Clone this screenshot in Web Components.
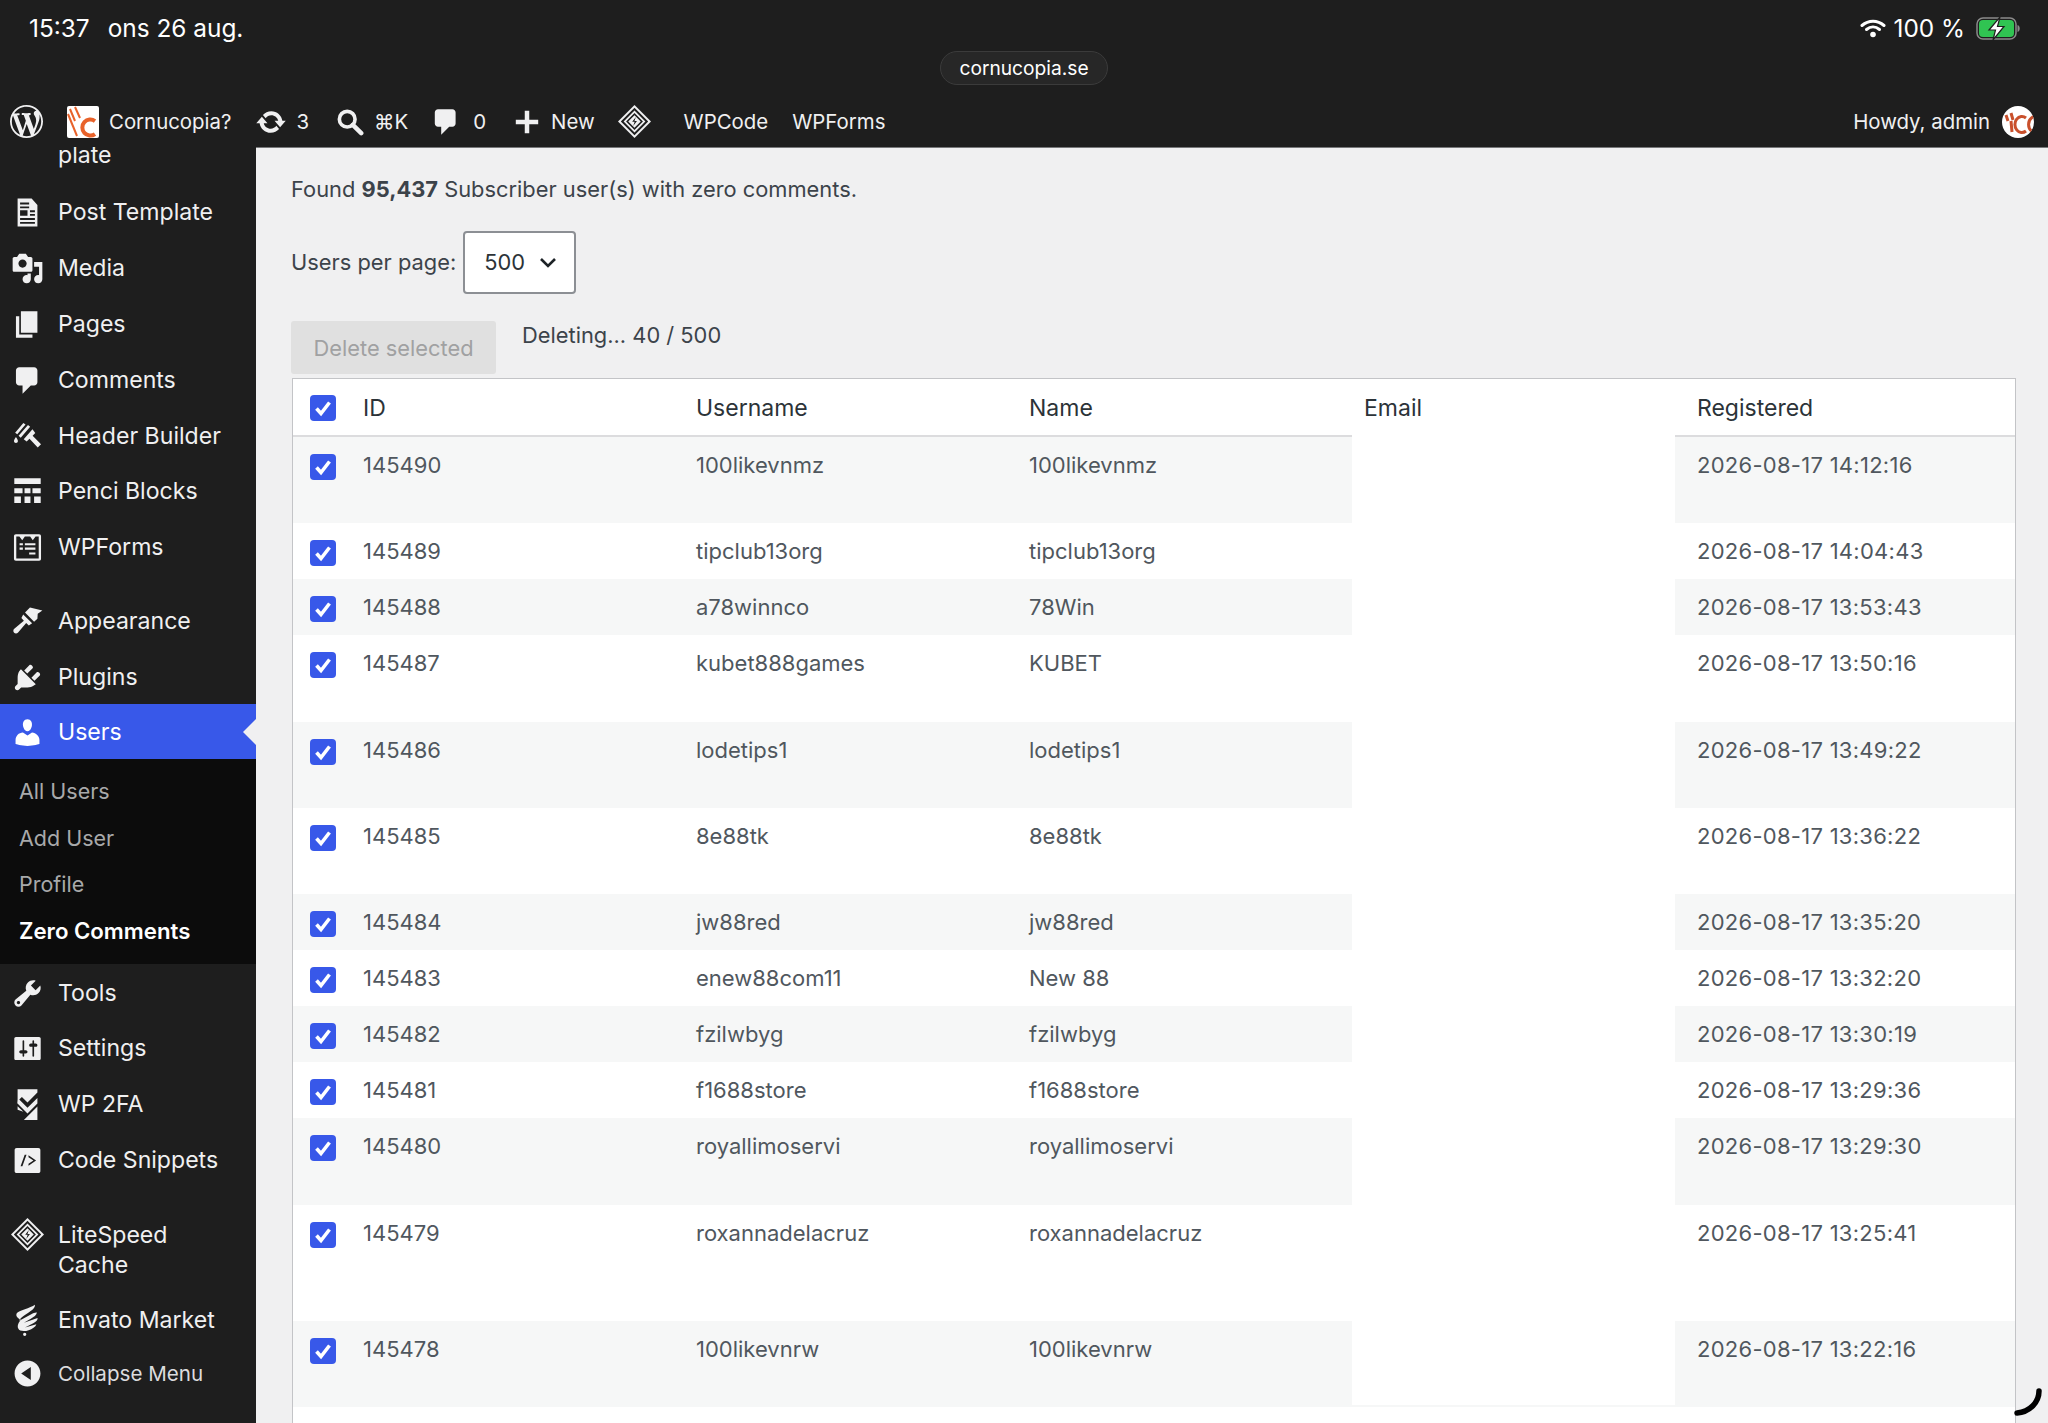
<!DOCTYPE html>
<html lang="sv">
<head>
<meta charset="utf-8">
<title>Zero Comments</title>
<style>
  html, body { margin: 0; height: 1423px; overflow: hidden; background: #1e1e1e; }
  body { font-family: Inter, "Noto Sans", sans-serif; display: flex; flex-direction: column; }
</style>
</head>
<body>
<top-chrome></top-chrome>
<wp-shell>
  <wp-sidebar slot="nav">
    <side-item cut>plate</side-item>
    <side-item icon="template">Post Template</side-item>
    <side-item icon="media">Media</side-item>
    <side-item icon="pages">Pages</side-item>
    <side-item icon="comments">Comments</side-item>
    <side-item icon="header">Header Builder</side-item>
    <side-item icon="penci">Penci Blocks</side-item>
    <side-item icon="forms">WPForms</side-item>
    <side-gap></side-gap>
    <side-item icon="appearance">Appearance</side-item>
    <side-item icon="plugins">Plugins</side-item>
    <side-item icon="users" current>Users</side-item>
    <side-sub>
      <a>All Users</a>
      <a>Add User</a>
      <a>Profile</a>
      <a class="on">Zero Comments</a>
    </side-sub>
    <side-item icon="tools">Tools</side-item>
    <side-item icon="settings">Settings</side-item>
    <side-item icon="twofa">WP 2FA</side-item>
    <side-item icon="code">Code Snippets</side-item>
    <side-gap></side-gap>
    <side-item icon="litespeed" tall>LiteSpeed Cache</side-item>
    <side-item icon="envato">Envato Market</side-item>
    <side-item icon="collapse" small>Collapse Menu</side-item>
  </wp-sidebar>
  <zero-panel>
    <user-table>
      <user-row uid="145490" user="100likevnmz" name="100likevnmz" date="2026-08-17 14:12:16" lines="2"></user-row>
      <user-row uid="145489" user="tipclub13org" name="tipclub13org" date="2026-08-17 14:04:43"></user-row>
      <user-row uid="145488" user="a78winnco" name="78Win" date="2026-08-17 13:53:43"></user-row>
      <user-row uid="145487" user="kubet888games" name="KUBET" date="2026-08-17 13:50:16" lines="2"></user-row>
      <user-row uid="145486" user="lodetips1" name="lodetips1" date="2026-08-17 13:49:22" lines="2"></user-row>
      <user-row uid="145485" user="8e88tk" name="8e88tk" date="2026-08-17 13:36:22" lines="2"></user-row>
      <user-row uid="145484" user="jw88red" name="jw88red" date="2026-08-17 13:35:20"></user-row>
      <user-row uid="145483" user="enew88com11" name="New 88" date="2026-08-17 13:32:20"></user-row>
      <user-row uid="145482" user="fzilwbyg" name="fzilwbyg" date="2026-08-17 13:30:19"></user-row>
      <user-row uid="145481" user="f1688store" name="f1688store" date="2026-08-17 13:29:36"></user-row>
      <user-row uid="145480" user="royallimoservi" name="royallimoservi" date="2026-08-17 13:29:30" lines="2"></user-row>
      <user-row uid="145479" user="roxannadelacruz" name="roxannadelacruz" date="2026-08-17 13:25:41" lines="3"></user-row>
      <user-row uid="145478" user="100likevnrw" name="100likevnrw" date="2026-08-17 13:22:16" lines="2"></user-row>
    </user-table>
  </zero-panel>
</wp-shell>

<script>
const ICONS = {
  wp: '<path d="M20 10c0-5.51-4.49-10-10-10C4.48 0 0 4.49 0 10c0 5.52 4.48 10 10 10 5.51 0 10-4.48 10-10zM7.78 15.37L4.37 6.22c.55-.02 1.17-.08 1.17-.08.5-.06.44-1.13-.06-1.11 0 0-1.45.11-2.37.11-.18 0-.37 0-.58-.01C4.12 2.69 6.87 1.11 10 1.11c2.33 0 4.45.87 6.05 2.34-.68-.11-1.65.39-1.65 1.58 0 .74.45 1.36.9 2.1.35.61.55 1.36.55 2.46 0 1.49-1.4 5-1.4 5l-3.03-8.37c.54-.02.82-.17.82-.17.5-.05.44-1.25-.06-1.22 0 0-1.44.12-2.38.12-.87 0-2.33-.12-2.33-.12-.5-.03-.56 1.2-.06 1.22l.92.08 1.26 3.41zM17.41 10c.24-.64.74-1.87.43-4.25.7 1.29 1.05 2.71 1.05 4.25 0 3.29-1.73 6.24-4.4 7.78.97-2.59 1.94-5.2 2.92-7.78zM6.1 18.09C3.12 16.65 1.11 13.53 1.11 10c0-1.3.23-2.48.72-3.59C3.25 10.3 4.67 14.2 6.1 18.09zm4.03-6.63l2.58 6.98c-.86.29-1.76.45-2.71.45-.79 0-1.57-.11-2.29-.33.81-2.38 1.62-4.74 2.42-7.1z"/>',
  sync: '<path d="M10.2 3.28c3.53 0 6.43 2.61 6.92 6h2.08l-3.5 4-3.5-4h2.32c-.45-1.97-2.21-3.45-4.32-3.45-1.45 0-2.73.71-3.54 1.78L4.95 5.66C6.23 4.2 8.11 3.28 10.2 3.28zm-.4 13.44c-3.52 0-6.43-2.61-6.92-6H.8l3.5-4c1.17 1.33 2.33 2.67 3.5 4H5.48c.45 1.97 2.21 3.45 4.32 3.45 1.45 0 2.73-.71 3.54-1.78l1.71 1.95c-1.28 1.46-3.15 2.38-5.25 2.38z"/>',
  search: '<circle cx="8" cy="8" r="5.6" fill="none" stroke="currentColor" stroke-width="2.6"/><path d="M12 12l6 6" stroke="currentColor" stroke-width="3.2" stroke-linecap="round"/>',
  plus: '<path d="M8.4 2h3.2v6.4H18v3.2h-6.4V18H8.4v-6.4H2V8.4h6.4z"/>',
  template: '<path fill-rule="evenodd" d="M4 1.5h8.5l3.5 4v13H4zM5.5 4v1.1H11V4zm0 2.3v1.1H11V6.3zm0 2.4V12H10V8.7zm6 0v1.1h3V8.7zm0 2.2V12h3v-1.1zM5.5 13.400v1.100h9v-1.100zm0 2.300v1.100h9v-1.100z"/>',
  media: '<path d="M13 11V4c0-.55-.45-1-1-1h-1.67L9 1H5L3.67 3H2c-.55 0-1 .45-1 1v7c0 .55.45 1 1 1h10c.55 0 1-.45 1-1zM7 4.5c1.38 0 2.5 1.12 2.5 2.5S8.38 9.5 7 9.5 4.5 8.38 4.5 7 5.62 4.5 7 4.5zM14 6h5v10.5c0 1.38-1.12 2.5-2.5 2.5S14 17.88 14 16.5s1.12-2.5 2.5-2.5c.17 0 .34.02.5.05V9h-3V6zm-4 8.05V13h2v3.5c0 1.38-1.12 2.5-2.5 2.5S7 17.88 7 16.5 8.12 14 9.5 14c.17 0 .34.02.5.05z"/>',
  pages: '<path d="M6 15V2h10v13H6zm-1 1h8v2H3V5h2v11z"/>',
  comments: '<path d="M5 2h9c1.1 0 2 .9 2 2v7c0 1.1-.9 2-2 2h-2l-5 5v-5H5c-1.1 0-2-.9-2-2V4c0-1.1.9-2 2-2z"/>',
  header: '<path d="M7.5 1.8l1.3 1L3.8 8.7 2.5 7.7zM10.3 3l1.3 1.100-5.700 6.600-1.300-1.100zM13 5.600l-5.300 6 1.800 1.500 1.700-1.700 5 5.200 2-1.900-5.100-5.100 1.600-1.700zM3 10.300c.5.900 1.200 1.700 1.200 2.500 0 .7-.5 1.200-1.200 1.200s-1.200-.5-1.200-1.200c0-.8.7-1.600 1.200-2.500z"/>',
  penci: '<path d="M2 2h16v3.4H2zM2 8h5v3H2zm6.2 0h3.600v3H8.200zM13 8h5v3h-5zM2 13h4v4H2zm6.200 0h3.600v4H8.200zM14 13h4v4h-4z"/>',
  forms: '<path fill-rule="evenodd" d="M3 2h14c.8 0 1.2.5 1.2 1.2v13.600c0 .7-.4 1.200-1.200 1.200H3c-.8 0-1.200-.5-1.200-1.200V3.200C1.800 2.500 2.200 2 3 2zm.2 1.400v13.200h13.600V3.400h-1.900L13.200 5.600 11.600 3.400H8.400L6.800 5.600 5.100 3.400zM5.200 7.400h2v1.300h-2zm3.200 0h6.400v1.300H8.400zM5.200 10h2v1.300h-2zm3.200 0h6.400v1.300H8.400zM11 13h3.800v1.300H11z"/>',
  appearance: '<path d="M11.500 1.500l7.500 1.800-2.800 2-.2 3-2 1.800-5.500-5.500zM7.400 5.700l5.400 5.400-2 1.300-1.600-1.500-4.900 5.800c-.7.7-1.800.7-2.400.1-.7-.7-.6-1.800.1-2.400l5.800-4.900-1.500-1.600z"/>',
  plugins: '<path d="M13.11 4.36L9.87 7.6 8 5.73l3.24-3.24c.35-.34 1.05-.2 1.56.32.52.51.66 1.21.31 1.55zm-8 1.77l.91-1.12 9.01 9.01-1.19.84c-.71.71-2.63 1.16-3.82 1.16H6.14L4.9 17.26c-.59.59-1.54.59-2.12 0-.59-.58-.59-1.53 0-2.12l1.24-1.24v-3.88c0-1.13.4-3.19 1.09-3.89zm7.26 3.97l3.24-3.24c.34-.35 1.04-.21 1.55.31.52.51.66 1.21.31 1.55l-3.24 3.25z"/>',
  users: '<path d="M10 9.25c-2.27 0-2.73-3.44-2.73-3.44C7 4.02 7.82 2 9.97 2c2.16 0 2.98 2.02 2.71 3.81 0 0-.41 3.44-2.68 3.44zm0 2.57L12.72 10c2.39 0 4.52 2.33 4.52 4.53v2.49s-3.65 1.13-7.24 1.13c-3.65 0-7.24-1.13-7.24-1.13v-2.49c0-2.25 1.94-4.48 4.47-4.48z"/>',
  tools: '<path d="M16.68 9.77c-1.34 1.34-3.3 1.67-4.95.99l-5.41 6.52c-.99.99-2.59.99-3.58 0s-.99-2.59 0-3.57l6.52-5.42c-.68-1.65-.35-3.61.99-4.95 1.28-1.28 3.12-1.62 4.72-1.06l-2.89 2.89 2.82 2.82 2.86-2.87c.53 1.58.18 3.39-1.08 4.65zM3.81 16.21c.4.39 1.04.39 1.43 0 .4-.4.4-1.04 0-1.43-.39-.4-1.03-.4-1.43 0-.39.39-.39 1.03 0 1.43z"/>',
  settings: '<path d="M18 16V4c0-.55-.45-1-1-1H3c-.55 0-1 .45-1 1v12c0 .55.45 1 1 1h14c.55 0 1-.45 1-1zM8 11h1c.55 0 1 .45 1 1s-.45 1-1 1H8v1.5c0 .28-.22.5-.5.5s-.5-.22-.5-.5V13H6c-.55 0-1-.45-1-1s.45-1 1-1h1V5.5c0-.28.22-.5.5-.5s.5.22.5.5V11zm5-2h-1c-.55 0-1-.45-1-1s.45-1 1-1h1V5.5c0-.28.22-.5.5-.5s.5.22.5.5V7h1c.55 0 1 .45 1 1s-.45 1-1 1h-1v5.5c0 .28-.22.5-.5.5s-.5-.22-.5-.5V9z"/>',
  twofa: '<path d="M4 .8h12v2L10 8.8 6.600 5.400 5 7l5 5 6-6v3.400L10 15.400 3.800 9.200 4 7zM4 11l3.500 3.400L4 13.200zM16 11.200V19.400H7.800z"/>',
  code: '<path fill-rule="evenodd" d="M3.500 2.400h13c.8 0 1.300.5 1.300 1.300v12.600c0 .8-.5 1.300-1.300 1.300h-13c-.8 0-1.300-.5-1.300-1.300V3.700c0-.8.5-1.300 1.300-1.300zM8.300 6.500L5.800 13.500h1.100l2.500-7zM10.600 6.800v1.300l3 1.900-3 1.900v1.300l4.600-3.200z"/>',
  litespeed: '<path fill-rule="evenodd" d="M10 0l10 10-10 10L0 10zm0 1.700L1.700 10l8.300 8.300 8.300-8.300zM10 3.400L16.600 10 10 16.600 3.400 10zm0 1.500L4.900 10l5.100 5.100 5.100-5.100zM10 6.200L13.800 10 10 13.800 6.200 10zM10.800 7.200L8.600 10.200h1.500l-.9 2.600 2.300-3.100H10z"/>',
  envato: '<path d="M14.500 .5c.2 1.900-1.700 3.300-4 4.800C8 7 5.500 8.500 5 10.200l7.300-4c1.300-.7 2.600-1.300 3.400-1-.2 1.500-1.800 2.700-3.700 3.800L7.800 11.300l8.300-2.800c.3 1-.9 2.200-2.600 3.200l-5 2.600 6.900-2c-.5 1.700-2.600 2.900-4.700 3.600-2.500.9-5.600.7-6.300-1-.8-1.700.3-3.900 1.600-5.300C4 8.600 2.800 7.500 3.400 5.800 4.700 3.800 11.800 2.600 14.500 .5zM8.300 17.400a1 1 0 1 1 0 2 1 1 0 0 1 0-2z"/>',
  collapse: '<path d="M10 2.160c4.330 0 7.840 3.510 7.840 7.840s-3.510 7.840-7.840 7.840S2.160 14.330 2.160 10 5.710 2.160 10 2.160zm2 11.720V6.120L6.180 9.970z"/>'
};

const svgIcon = (name, size) =>
  `<svg viewBox="0 0 20 20" width="${size}" height="${size}" fill="currentColor" aria-hidden="true">${ICONS[name]}</svg>`;

class TopChrome extends HTMLElement {
  constructor() {
    super();
    this.attachShadow({ mode: 'open' });
    this.shadowRoot.innerHTML = `
      <style>
        :host { display: block; height: 147px; background: #1e1e1e; color: #f0f0f1; position: relative; z-index: 2; font-size: 20.4px; }
        .status { height: 51px; display: flex; align-items: center; padding: 5px 28px 0 29px; box-sizing: border-box; font-size: 24.4px; color: #fff; }
        .status .date { margin-left: 18px; }
        .status .right { margin-left: auto; display: flex; align-items: center; }
        .status .pct { margin: 0 11px 0 7px; }
        .pill-row { height: 34px; display: flex; justify-content: center; }
        .pill { width: 168px; box-sizing: border-box; border: 1px solid #3b3b3b; border-radius: 17px; background: #272727; display: flex; align-items: center; justify-content: center; font-size: 19.2px; color: #fff; }
        .bar { height: 62px; box-sizing: border-box; display: flex; align-items: center; padding: 11px 14px 0 10px; }
        .bar span { white-space: nowrap; }
        .bar svg { flex: none; display: block; }
        .right-bar { margin-left: auto; display: flex; align-items: center; gap: 12px; }
      </style>
      <div class="status">
        <span>15:37</span><span class="date">ons 26 aug.</span>
        <div class="right">
          <svg width="26" height="19" viewBox="0 0 26 19" fill="none" stroke="#fff" stroke-linecap="round">
            <path d="M2 6.5C8.5 .8 17.5 .8 24 6.5" stroke-width="3"/>
            <path d="M6.5 10.5c4-3.300 9-3.300 13 0" stroke-width="3"/>
            <circle cx="13" cy="15.5" r="2.8" fill="#fff" stroke="none"/>
          </svg>
          <span class="pct">100 %</span>
          <svg width="44" height="23" viewBox="0 0 44 23">
            <rect x="1" y="1" width="39" height="21" rx="6" fill="none" stroke="#8a8a8a" stroke-width="1.5"/>
            <rect x="3" y="3" width="35" height="17" rx="4" fill="#30c452"/>
            <path d="M41.5 8v7c1.500-.5 2.200-1.800 2.200-3.500s-.7-3-2.200-3.500z" fill="#8a8a8a"/>
            <path d="M24 0L13 13h6.500L17 23l11-13.500h-6.500z" fill="#fff" stroke="#1e1e1e" stroke-width="1.2"/>
          </svg>
        </div>
      </div>
      <div class="pill-row"><div class="pill">cornucopia.se</div></div>
      <div class="bar">
        ${svgIcon('wp', 33)}
        <svg style="margin-left:24px" width="32" height="32" viewBox="0 0 32 32">
          <rect width="32" height="32" rx="2" fill="#fff"/>
          <path d="M3 3l5 12M8 1l5 11" stroke="#e8622a" stroke-width="2"/>
          <path d="M28 15a8 8 0 1 0 0 13" fill="none" stroke="#e8622a" stroke-width="4"/>
          <path d="M1 8l9 22" stroke="#e8622a" stroke-width="2"/>
        </svg>
        <span style="margin-left:10px">Cornucopia?</span>
        <span style="margin-left:24px;display:flex">${svgIcon('sync', 32)}</span>
        <span style="margin-left:9px">3</span>
        <span style="margin-left:27px;display:flex">${svgIcon('search', 28)}</span>
        <span style="margin-left:10px">⌘K</span>
        <span style="margin-left:22px;display:flex">${svgIcon('comments', 32)}</span>
        <span style="margin-left:11px">0</span>
        <span style="margin-left:27px;display:flex">${svgIcon('plus', 28)}</span>
        <span style="margin-left:10px">New</span>
        <span style="margin-left:23px;display:flex">${svgIcon('litespeed', 33)}</span>
        <span style="margin-left:33px">WPCode</span>
        <span style="margin-left:24px">WPForms</span>
        <div class="right-bar">
          <span>Howdy, admin</span>
          <svg width="32" height="32" viewBox="0 0 32 32">
            <defs><clipPath id="av"><circle cx="16" cy="16" r="16"/></clipPath></defs>
            <circle cx="16" cy="16" r="16" fill="#fff"/>
            <g clip-path="url(#av)" fill="none" stroke="#c9502c" stroke-width="3">
              <path d="M4 9l2 6M9 7l2 7M9 15l1 11"/>
              <path d="M24 12a7 8 0 1 0 0 13"/>
              <path d="M36 11a7 8 0 1 0 0 15"/>
            </g>
          </svg>
        </div>
      </div>
    `;
  }
}

class WpShell extends HTMLElement {
  constructor() {
    super();
    this.attachShadow({ mode: 'open' });
    this.shadowRoot.innerHTML = `
      <style>
        :host { display: flex; flex: 1; min-height: 0; overflow: hidden; }
        ::slotted([slot="nav"]) { flex: none; width: 256px; }
      </style>
      <slot name="nav"></slot>
      <slot></slot>
    `;
  }
}

class WpSidebar extends HTMLElement {
  constructor() {
    super();
    this.attachShadow({ mode: 'open' });
    this.shadowRoot.innerHTML = `
      <style>
        :host { display: block; background: #1e1e1e; color: #f0f0f1; font-size: 23.1px; overflow: hidden; }
      </style>
      <slot></slot>
    `;
  }
}

class SideItem extends HTMLElement {
  constructor() {
    super();
    const icon = this.getAttribute('icon');
    this.attachShadow({ mode: 'open' });
    this.shadowRoot.innerHTML = `
      <style>
        :host { display: flex; align-items: center; height: 55.95px; position: relative; box-sizing: border-box; }
        :host([cut]) { height: 37.3px; align-items: flex-end; padding-bottom: 13px; }
        :host([tall]) { height: 86px; }
        :host([small]) { font-size: 20.6px; color: #dcdcde; height: 50px; }
        :host([current]) { background: #3858e9; color: #fff; height: 55px; margin-top: -2px; padding-top: 3px; }
        :host([current])::after { content: ""; position: absolute; right: 0; top: 15px; border: 13px solid transparent; border-right-color: #f0f0f1; border-left-width: 0; }
        .icon { flex: none; width: 33px; margin: 0 14px 0 11px; display: flex; }
        :host([tall]) .icon { margin-top: -30px; }
        :host([small]) .icon { color: #f0f0f1; }
        .label { line-height: 31px; min-width: 0; }
        :host([tall]) .label { max-width: 150px; line-height: 30px; }
      </style>
      <span class="icon">${icon ? svgIcon(icon, 33) : ''}</span>
      <span class="label"><slot></slot></span>
    `;
  }
}

class SideGap extends HTMLElement {
  constructor() {
    super();
    this.attachShadow({ mode: 'open' });
    this.shadowRoot.innerHTML = `<style>:host { display: block; height: 18px; }</style>`;
  }
}

class SideSub extends HTMLElement {
  constructor() {
    super();
    this.attachShadow({ mode: 'open' });
    this.shadowRoot.innerHTML = `
      <style>
        :host { display: block; background: #0c0c0c; padding: 9.6px 0 10.2px 19px; font-size: 21.5px; margin-bottom: 1px; }
        ::slotted(a) { display: block; height: 46.4px; line-height: 46.4px; color: #a8a9aa; }
        ::slotted(a.on) { color: #fff; font-weight: 600; font-size: 22.2px; }
      </style>
      <slot></slot>
    `;
  }
}

class ZeroPanel extends HTMLElement {
  constructor() {
    super();
    this.attachShadow({ mode: 'open' });
    this.shadowRoot.innerHTML = `
      <style>
        :host { display: block; flex: 1; min-width: 0; background: #f0f0f1; border-top: 1px solid #77787a; padding: 26px 32px 0 35px; color: #3c434a; font-size: 21.85px; line-height: 31px; position: relative; }
        p { margin: 0; }
        .perpage { display: flex; align-items: center; gap: 7px; margin-top: 26px; }
        .select { box-sizing: border-box; width: 113px; height: 63px; background: #fff; border: 2px solid #8c8f94; border-radius: 4px; display: flex; align-items: center; padding-left: 19px; gap: 14px; color: #2c3338; }
        .actions { display: flex; align-items: flex-start; gap: 26px; margin: 27px 0 4px; }
        .btn { box-sizing: border-box; width: 205px; height: 53px; padding-top: 2px; background: #e0e0e0; border-radius: 3px; color: #a0a1a2; display: flex; align-items: center; justify-content: center; }
        .progress { margin-top: -1px; }
        .spin { position: absolute; left: 1758px; top: 1240px; }
      </style>
      <p>Found <b>95,437</b> Subscriber user(s) with zero comments.</p>
      <div class="perpage">
        <span>Users per page:</span>
        <div class="select"><span>500</span>
          <svg width="18" height="11" viewBox="0 0 18 11" fill="none" stroke="#1d2327" stroke-width="2.6"><path d="M2 2l7 7 7-7"/></svg>
        </div>
      </div>
      <div class="actions">
        <div class="btn">Delete selected</div>
        <span class="progress">Deleting... 40 / 500</span>
      </div>
      <slot></slot>
      <svg class="spin" width="28" height="28" viewBox="0 0 28 28" fill="none" stroke="#000" stroke-width="5.5" stroke-linecap="round"><path d="M25 3c0 11-9 21-22 22"/></svg>
    `;
  }
}

class UserCheck extends HTMLElement {
  constructor() {
    super();
    this.attachShadow({ mode: 'open' });
    this.shadowRoot.innerHTML = `
      <style>
        :host { display: block; width: 26px; height: 26px; background: #3858e9; border-radius: 4px; }
        svg { display: block; }
      </style>
      <svg width="26" height="26" viewBox="0 0 26 26" fill="none" stroke="#fff" stroke-width="3.6"><path d="M6.5 13.5l4.5 5L19.5 7.5"/></svg>
    `;
  }
}

class UserTable extends HTMLElement {
  constructor() {
    super();
    this.attachShadow({ mode: 'open' });
    this.shadowRoot.innerHTML = `
      <style>
        :host { display: block; margin-left: 1px; background: #fff; border: 1px solid #c3c4c7; border-bottom: 0; height: 1100px; --cols: 53px 334px 333px 339px 323px 1fr; }
        .head { display: grid; grid-template-columns: var(--cols); height: 58px; color: #2c3338; font-size: 23px; }
        .head > div { border-bottom: 2px solid #dcdcde; padding-top: 14px; box-sizing: border-box; }
        .head > .check { padding: 16px 0 0 17px; }
        .id { padding-left: 17px; }
        .u { padding-left: 16px; }
        .n { padding-left: 16px; }
        .head > .e { padding-left: 12px; border-bottom: 0; }
        .r { padding-left: 22px; }
      </style>
      <div class="head">
        <div class="check"><user-check></user-check></div>
        <div class="id">ID</div>
        <div class="u">Username</div>
        <div class="n">Name</div>
        <div class="e">Email</div>
        <div class="r">Registered</div>
      </div>
      <slot></slot>
    `;
  }
}

class UserRow extends HTMLElement {
  constructor() {
    super();
    this.attachShadow({ mode: 'open' });
    this.shadowRoot.innerHTML = `
      <style>
        :host { display: grid; grid-template-columns: var(--cols); height: 56.05px; color: #50575e; font-size: 22px; }
        :host([lines="2"]) { height: 86.25px; }
        :host([lines="3"]) { height: 116.45px; }
        :host(:nth-child(odd)) { background: #f6f7f7; }
        :host(:last-child) .e { margin-bottom: 2px; }
        div { padding-top: 13px; box-sizing: border-box; white-space: nowrap; }
        .check { padding: 17px 0 0 17px; }
        .id { padding-left: 17px; }
        .u, .n { padding-left: 16px; }
        .e { background: #fff; padding: 0; }
        .r { padding-left: 22px; letter-spacing: .27px; }
      </style>
      <div class="check"><user-check></user-check></div>
      <div class="id">${this.getAttribute('uid')}</div>
      <div class="u">${this.getAttribute('user')}</div>
      <div class="n">${this.getAttribute('name')}</div>
      <div class="e"></div>
      <div class="r">${this.getAttribute('date')}</div>
    `;
  }
}

customElements.define('top-chrome', TopChrome);
customElements.define('wp-shell', WpShell);
customElements.define('wp-sidebar', WpSidebar);
customElements.define('side-item', SideItem);
customElements.define('side-gap', SideGap);
customElements.define('side-sub', SideSub);
customElements.define('zero-panel', ZeroPanel);
customElements.define('user-check', UserCheck);
customElements.define('user-table', UserTable);
customElements.define('user-row', UserRow);
</script>
</body>
</html>
